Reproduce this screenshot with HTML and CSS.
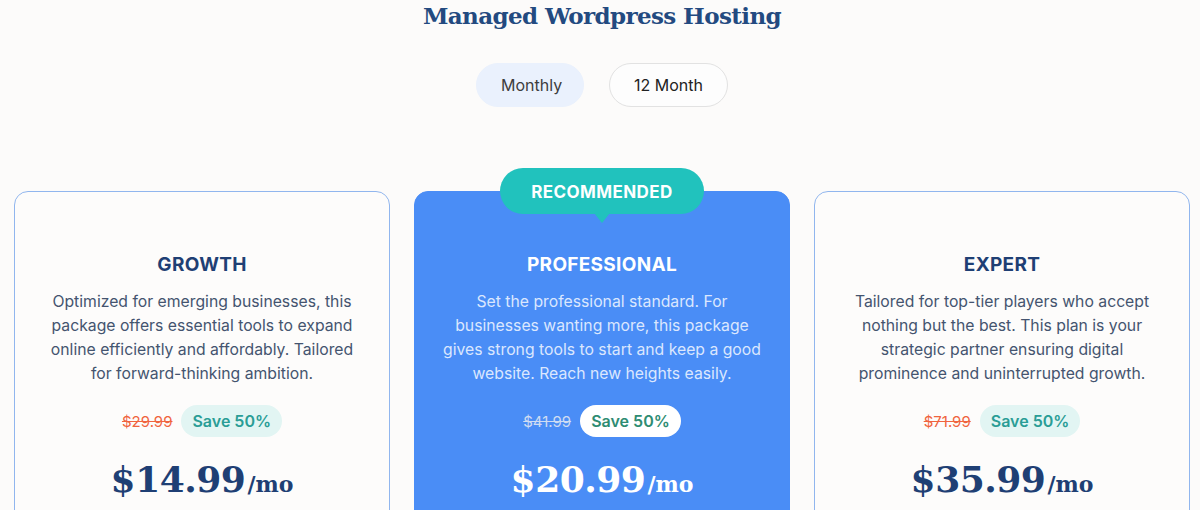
FILE: index.html
```html
<!DOCTYPE html>
<html lang="en">
<head>
<meta charset="utf-8">
<title>Managed Wordpress Hosting</title>
<link rel="stylesheet" href="styles.css">
</head>
<body>
<main class="page">
  <h1 class="heading">Managed Wordpress Hosting</h1>
  <div class="toggle">
    <button class="toggle-btn toggle-btn--active">Monthly</button>
    <button class="toggle-btn">12 Month</button>
  </div>
  <section class="plans">
    <article class="card">
      <h2 class="card-title">GROWTH</h2>
      <p class="card-desc">Optimized for emerging businesses, this package offers essential tools to expand online efficiently and affordably. Tailored for forward-thinking ambition.</p>
      <div class="price-row">
        <span class="old-price">$29.99</span>
        <span class="save">Save 50%</span>
      </div>
      <div class="price"><span class="amount">$14.99</span><span class="per">/mo</span></div>
    </article>
    <article class="card card--featured">
      <div class="badge">RECOMMENDED</div>
      <h2 class="card-title">PROFESSIONAL</h2>
      <p class="card-desc">Set the professional standard. For businesses wanting more, this package gives strong tools to start and keep a good website. Reach new heights easily.</p>
      <div class="price-row">
        <span class="old-price">$41.99</span>
        <span class="save">Save 50%</span>
      </div>
      <div class="price"><span class="amount">$20.99</span><span class="per">/mo</span></div>
    </article>
    <article class="card">
      <h2 class="card-title">EXPERT</h2>
      <p class="card-desc">Tailored for top-tier players who accept nothing but the best. This plan is your strategic partner ensuring digital prominence and uninterrupted growth.</p>
      <div class="price-row">
        <span class="old-price">$71.99</span>
        <span class="save">Save 50%</span>
      </div>
      <div class="price"><span class="amount">$35.99</span><span class="per">/mo</span></div>
    </article>
  </section>
</main>
</body>
</html>
```

FILE: styles.css
```css
* { box-sizing: border-box; }

html, body {
  margin: 0;
  padding: 0;
  background: #fcfbfa;
}

body {
  font-family: Inter, "Noto Sans", sans-serif;
  color: #44546f;
}

.page {
  padding: 0 10px 0 14px;
}

.heading {
  margin: 0;
  text-align: center;
  font-family: "DejaVu Serif", serif;
  font-weight: bold;
  font-size: 23px;
  letter-spacing: -0.6px;
  line-height: 32px;
  color: #234a80;
}

.toggle {
  display: flex;
  justify-content: center;
  gap: 25px;
  margin-top: 31px;
}

.toggle-btn {
  height: 44px;
  padding: 0 24px;
  border-radius: 22px;
  border: 1px solid #e2e2e2;
  background: #fdfdfd;
  font-family: Inter, sans-serif;
  font-size: 16px;
  color: #222;
  cursor: pointer;
}

.toggle-btn--active {
  background: #eaf1fd;
  border-color: #eaf1fd;
  color: #3d3d3d;
  width: 108px;
}

.plans {
  display: grid;
  grid-template-columns: repeat(3, 1fr);
  gap: 24px;
  margin-top: 84px;
}

.card {
  position: relative;
  border: 1px solid #91b6ee;
  border-radius: 14px;
  padding: 61px 27px 80px;
  text-align: center;
  background: #fdfcfb;
}

.card--featured {
  background: #4a8df6;
  border-color: #4a8df6;
  color: #dbe7fe;
}

.badge {
  position: absolute;
  top: -24px;
  left: 50%;
  transform: translateX(-50%);
  width: 204px;
  height: 46px;
  padding-top: 3px;
  border-radius: 23px;
  background: #21c2bd;
  color: #fff;
  font-weight: 700;
  font-size: 17px;
  letter-spacing: 0.4px;
  line-height: 43px;
}

.badge::after {
  content: "";
  position: absolute;
  left: 50%;
  bottom: -9px;
  margin-left: -8px;
  border-left: 8px solid transparent;
  border-right: 8px solid transparent;
  border-top: 10px solid #21c2bd;
}

.card-title {
  margin: 0;
  font-size: 19px;
  line-height: 24px;
  font-weight: 700;
  letter-spacing: 0.3px;
  color: #1f3f74;
}

.card--featured .card-title {
  color: #fff;
}

.card-desc {
  margin: 13px 0 0;
  font-size: 15.75px;
  line-height: 24px;
}

.price-row {
  display: flex;
  justify-content: center;
  align-items: center;
  gap: 9px;
  margin-top: 19px;
}

.old-price {
  font-size: 15px;
  color: #f0643e;
  text-decoration: line-through;
}

.card--featured .old-price {
  color: #cfdcf2;
}

.save {
  height: 32px;
  line-height: 32px;
  padding: 0 11px;
  border-radius: 16px;
  background: #e2f5f3;
  color: #2a9d96;
  font-weight: 600;
  font-size: 16px;
}

.card--featured .save {
  background: #fff;
  color: #2e8c72;
}

.price {
  margin-top: 16px;
  line-height: 52px;
  color: #1f3f74;
  font-family: "DejaVu Serif", serif;
  font-weight: bold;
}

.card--featured .price {
  color: #fff;
}

.amount {
  font-size: 36px;
  letter-spacing: -0.5px;
}

.per {
  font-size: 22px;
  margin-left: 2px;
}
```
